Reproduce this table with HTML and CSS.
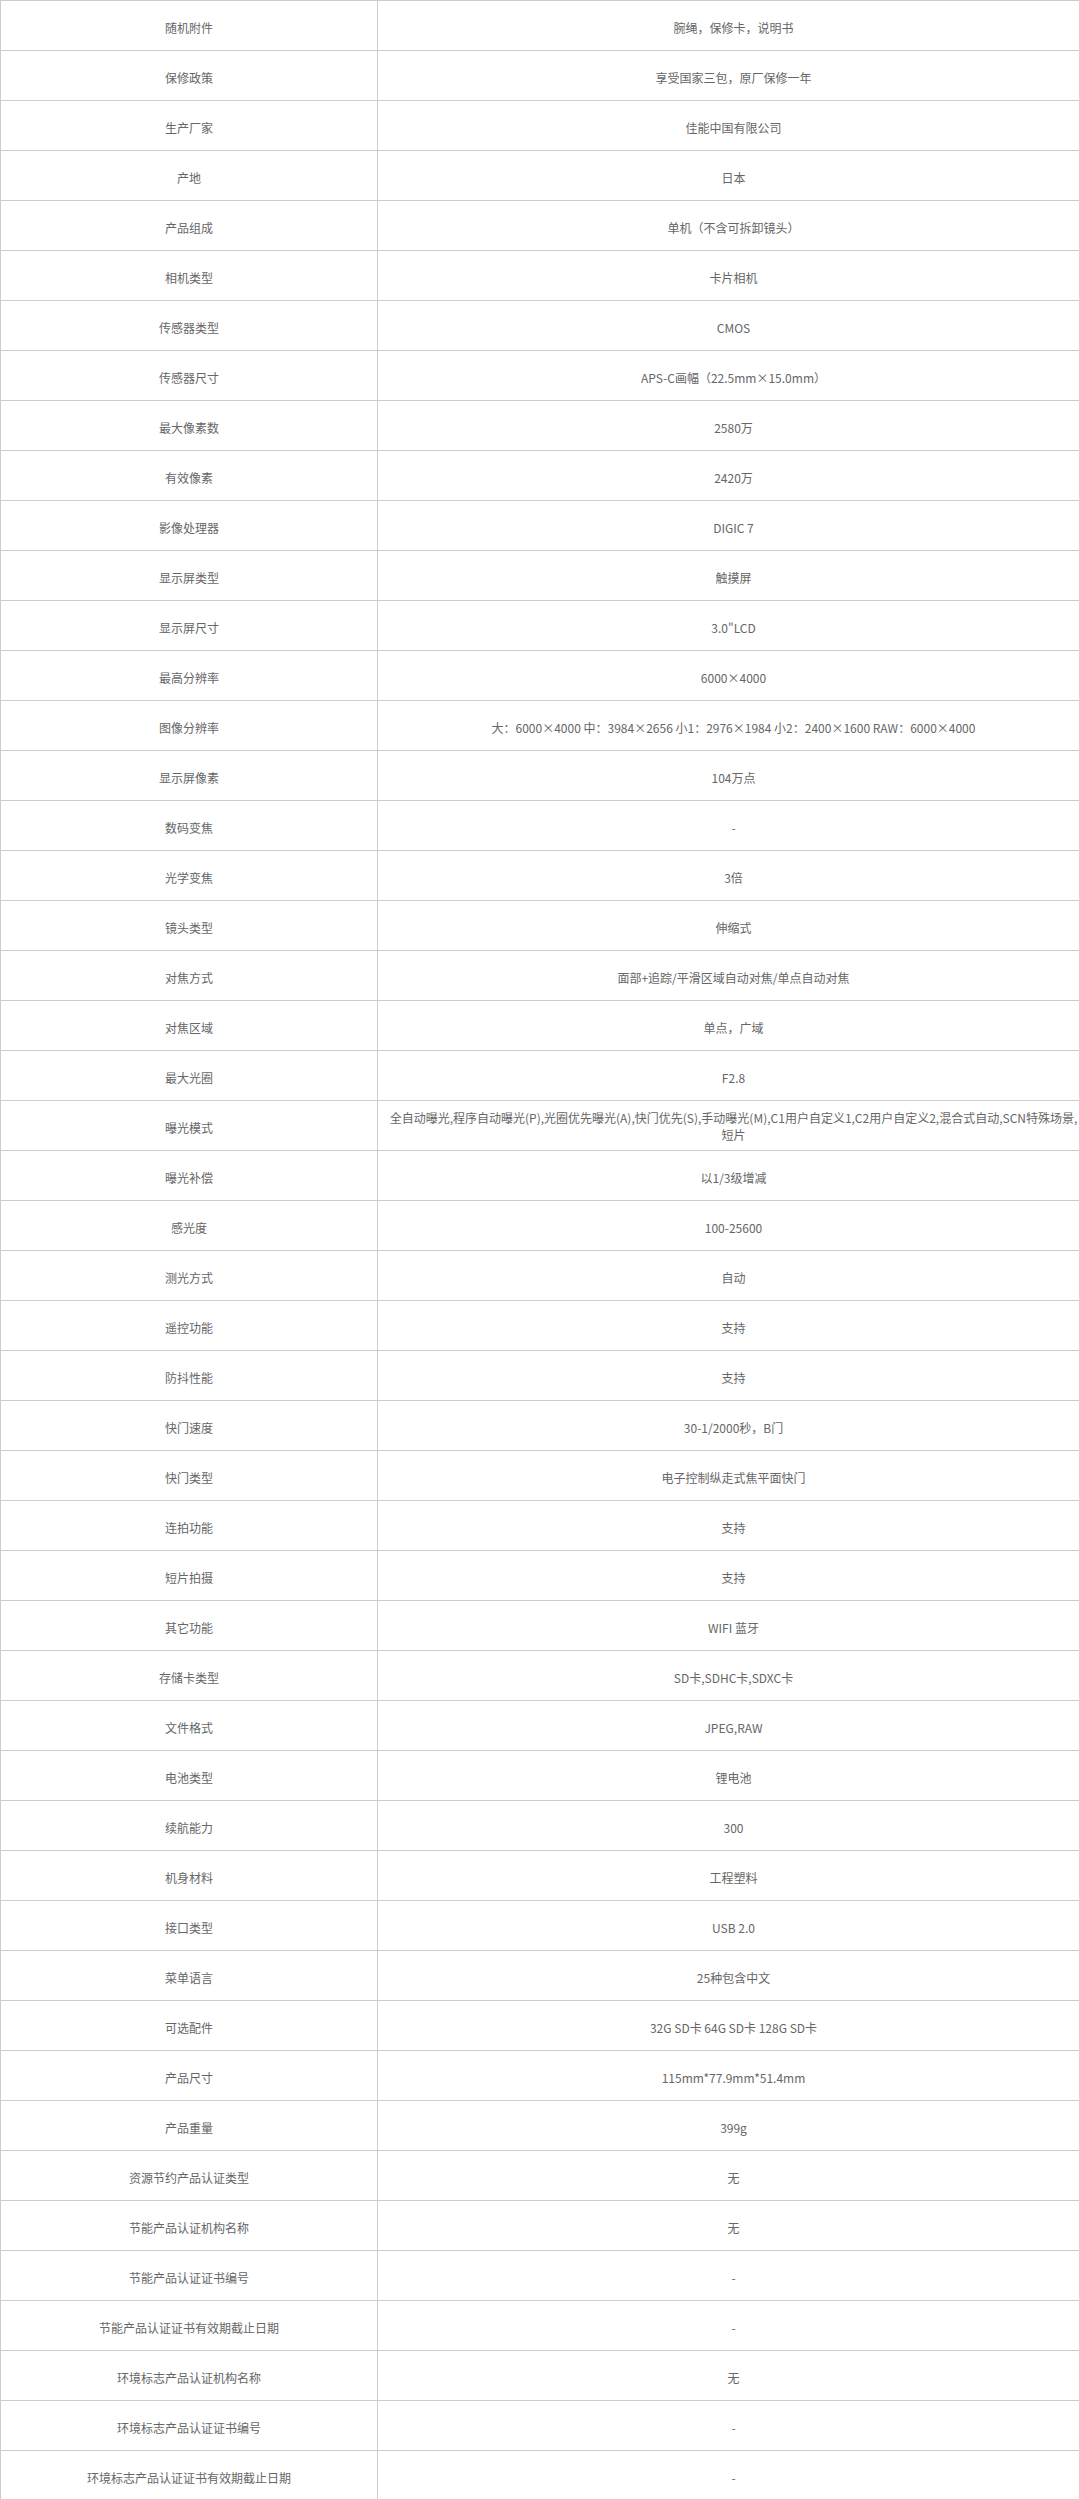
FILE: index.html
```html
<!DOCTYPE html>
<html lang="zh-CN">
<head>
<meta charset="utf-8">
<title>产品参数</title>
<link rel="stylesheet" href="styles.css">
</head>
<body>
<div class="page">
  <div class="specs">
    <div class="row"><div class="key">随机附件</div><div class="val">腕绳，保修卡，说明书</div></div>
    <div class="row"><div class="key">保修政策</div><div class="val">享受国家三包，原厂保修一年</div></div>
    <div class="row"><div class="key">生产厂家</div><div class="val">佳能中国有限公司</div></div>
    <div class="row"><div class="key">产地</div><div class="val">日本</div></div>
    <div class="row"><div class="key">产品组成</div><div class="val">单机（不含可拆卸镜头）</div></div>
    <div class="row"><div class="key">相机类型</div><div class="val">卡片相机</div></div>
    <div class="row"><div class="key">传感器类型</div><div class="val">CMOS</div></div>
    <div class="row"><div class="key">传感器尺寸</div><div class="val">APS-C画幅（22.5mm×15.0mm）</div></div>
    <div class="row"><div class="key">最大像素数</div><div class="val">2580万</div></div>
    <div class="row"><div class="key">有效像素</div><div class="val">2420万</div></div>
    <div class="row"><div class="key">影像处理器</div><div class="val">DIGIC 7</div></div>
    <div class="row"><div class="key">显示屏类型</div><div class="val">触摸屏</div></div>
    <div class="row"><div class="key">显示屏尺寸</div><div class="val">3.0"LCD</div></div>
    <div class="row"><div class="key">最高分辨率</div><div class="val">6000×4000</div></div>
    <div class="row"><div class="key">图像分辨率</div><div class="val">大：6000×4000 中：3984×2656 小1：2976×1984 小2：2400×1600 RAW：6000×4000</div></div>
    <div class="row"><div class="key">显示屏像素</div><div class="val">104万点</div></div>
    <div class="row"><div class="key">数码变焦</div><div class="val">-</div></div>
    <div class="row"><div class="key">光学变焦</div><div class="val">3倍</div></div>
    <div class="row"><div class="key">镜头类型</div><div class="val">伸缩式</div></div>
    <div class="row"><div class="key">对焦方式</div><div class="val">面部+追踪/平滑区域自动对焦/单点自动对焦</div></div>
    <div class="row"><div class="key">对焦区域</div><div class="val">单点，广域</div></div>
    <div class="row"><div class="key">最大光圈</div><div class="val">F2.8</div></div>
    <div class="row"><div class="key">曝光模式</div><div class="val"><p class="wrap">全自动曝光,程序自动曝光(P),光圈优先曝光(A),快门优先(S),手动曝光(M),C1用户自定义1,C2用户自定义2,混合式自动,SCN特殊场景,<span class="nw">短片</span></p></div></div>
    <div class="row"><div class="key">曝光补偿</div><div class="val">以1/3级增减</div></div>
    <div class="row"><div class="key">感光度</div><div class="val">100-25600</div></div>
    <div class="row"><div class="key">测光方式</div><div class="val">自动</div></div>
    <div class="row"><div class="key">遥控功能</div><div class="val">支持</div></div>
    <div class="row"><div class="key">防抖性能</div><div class="val">支持</div></div>
    <div class="row"><div class="key">快门速度</div><div class="val">30-1/2000秒，B门</div></div>
    <div class="row"><div class="key">快门类型</div><div class="val">电子控制纵走式焦平面快门</div></div>
    <div class="row"><div class="key">连拍功能</div><div class="val">支持</div></div>
    <div class="row"><div class="key">短片拍摄</div><div class="val">支持</div></div>
    <div class="row"><div class="key">其它功能</div><div class="val">WIFI 蓝牙</div></div>
    <div class="row"><div class="key">存储卡类型</div><div class="val">SD卡,SDHC卡,SDXC卡</div></div>
    <div class="row"><div class="key">文件格式</div><div class="val">JPEG,RAW</div></div>
    <div class="row"><div class="key">电池类型</div><div class="val">锂电池</div></div>
    <div class="row"><div class="key">续航能力</div><div class="val">300</div></div>
    <div class="row"><div class="key">机身材料</div><div class="val">工程塑料</div></div>
    <div class="row"><div class="key">接口类型</div><div class="val">USB 2.0</div></div>
    <div class="row"><div class="key">菜单语言</div><div class="val">25种包含中文</div></div>
    <div class="row"><div class="key">可选配件</div><div class="val">32G SD卡 64G SD卡 128G SD卡</div></div>
    <div class="row"><div class="key">产品尺寸</div><div class="val">115mm*77.9mm*51.4mm</div></div>
    <div class="row"><div class="key">产品重量</div><div class="val">399g</div></div>
    <div class="row"><div class="key">资源节约产品认证类型</div><div class="val">无</div></div>
    <div class="row"><div class="key">节能产品认证机构名称</div><div class="val">无</div></div>
    <div class="row"><div class="key">节能产品认证证书编号</div><div class="val">-</div></div>
    <div class="row"><div class="key">节能产品认证证书有效期截止日期</div><div class="val">-</div></div>
    <div class="row"><div class="key">环境标志产品认证机构名称</div><div class="val">无</div></div>
    <div class="row"><div class="key">环境标志产品认证证书编号</div><div class="val">-</div></div>
    <div class="row"><div class="key">环境标志产品认证证书有效期截止日期</div><div class="val">-</div></div>
  </div>
</div>
</body>
</html>
```

FILE: styles.css
```css
html, body {
  margin: 0;
  padding: 0;
  background: #ffffff;
}

.page {
  width: 1079px;
  overflow: hidden;
}

.specs {
  width: 1079px;
  font-family: "Microsoft YaHei", "Noto Sans CJK SC", "Noto Sans", sans-serif;
  font-size: 12px;
  line-height: 17px;
  color: #666666;
}

.row {
  display: grid;
  grid-template-columns: 378px 1fr;
  height: 50px;
  box-sizing: border-box;
  border-top: 1px solid #cccccc;
}

.key,
.val {
  display: flex;
  align-items: center;
  justify-content: center;
  text-align: center;
  padding-top: 3px;
}

.key {
  border-left: 1px solid #cccccc;
  border-right: 1px solid #cccccc;
  padding-left: 4px;
  padding-right: 4px;
}

.val {
  padding-left: 10px;
  padding-right: 0;
}

.wrap {
  margin: 0;
  margin-top: -3px;
}

.nw {
  white-space: nowrap;
}
```
